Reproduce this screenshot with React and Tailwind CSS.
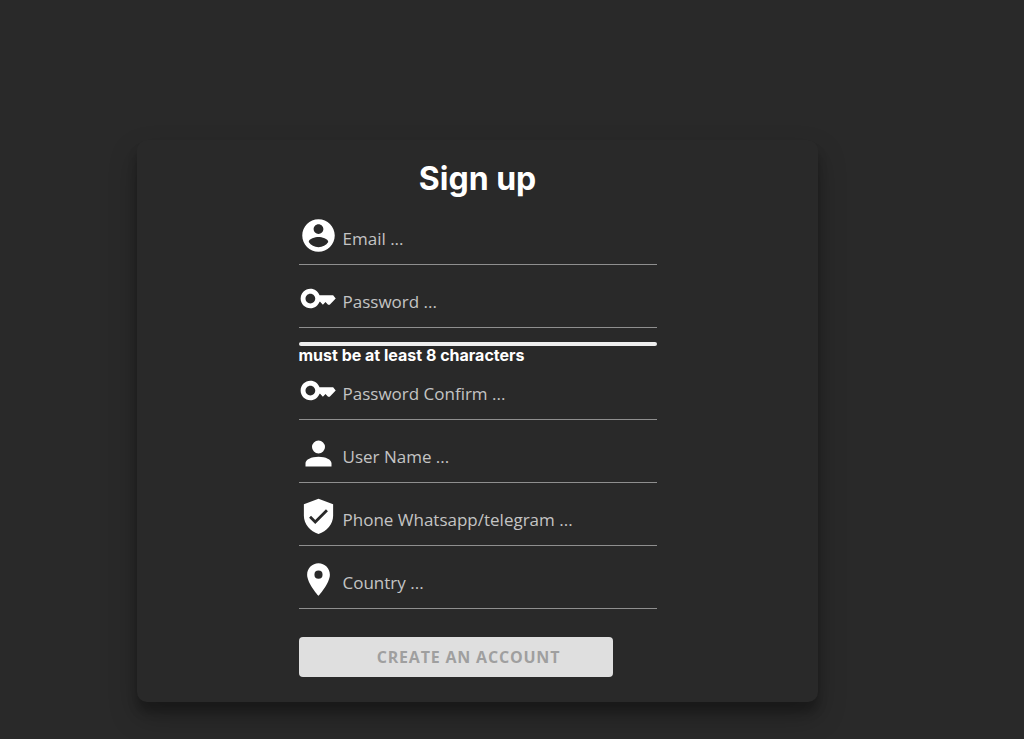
import React, {useState} from 'react';

const icons = {
  account:
    'M12 2C6.48 2 2 6.48 2 12s4.48 10 10 10 10-4.48 10-10S17.52 2 12 2zm0 3c1.66 0 3 1.34 3 3s-1.34 3-3 3-3-1.34-3-3 1.34-3 3-3zm0 14.2c-2.5 0-4.71-1.28-6-3.22.03-1.99 4-3.08 6-3.08 1.99 0 5.97 1.09 6 3.08-1.29 1.94-3.5 3.22-6 3.22z',
  key:
    'M21 10h-8.35C11.83 7.67 9.61 6 7 6c-3.31 0-6 2.69-6 6s2.69 6 6 6c2.61 0 4.83-1.67 5.65-4H13l1.7 1.8 1.6-1.6 1.6 1.6h1l3.7-3.8L21 10zM7 15c-1.65 0-3-1.35-3-3s1.35-3 3-3 3 1.35 3 3-1.35 3-3 3z',
  user:
    'M12 4a4 4 0 1 1 0 8 4 4 0 0 1 0-8zm0 10c4.42 0 8 1.79 8 4v2H4v-2c0-2.21 3.58-4 8-4z',
  shield:
    'M12 1L3 4.5V11.5c0 5 3.9 9.8 9 11.2 5.1-1.4 9-6.2 9-11.2V4.5L12 1zM10 16.6l-3.8-3.8 1.2-1.2 2.6 2.6 6.6-6.6 1.2 1.2L10 16.6z',
  pin:
    'M12 2C8.13 2 5 5.13 5 9c0 5.25 7 13 7 13s7-7.75 7-13c0-3.87-3.13-7-7-7zm0 9.5a2.5 2.5 0 1 1 0-5 2.5 2.5 0 0 1 0 5z'
};

const Field = ({name, icon, label, type = 'text', value, onChange}) => (
  <div className="flex h-[63px] items-start gap-[5px] border-b border-[#8f8f8f] pt-[14px]">
    <svg
      className="h-[39px] w-[39px] shrink-0 fill-white"
      viewBox="0 0 24 24"
      aria-hidden="true">
      <path fillRule="evenodd" d={icons[icon]} />
    </svg>
    <input
      id={name}
      name={name}
      type={type}
      aria-label={label}
      placeholder={`${label} ...`}
      value={value || ''}
      onChange={e => onChange(name, e.target.value)}
      className="mt-[6px] h-8 min-w-0 flex-1 bg-transparent text-[17px] text-white outline-none placeholder:text-[#c4c4c4]"
    />
  </div>
);

export default function App() {
  const [form, setForm] = useState({});
  const update = (name, value) => setForm({...form, [name]: value});
  const disabled = !form.email || !form.password || !form.username;

  const field = (name, icon, label, type) => (
    <Field
      name={name}
      icon={icon}
      label={label}
      type={type}
      value={form[name]}
      onChange={update}
    />
  );

  return (
    <main className="min-h-screen bg-[#292929] px-[137px] pt-[140px] pb-[37px] font-['Open_Sans',sans-serif]">
      <form
        className="mr-[69px] rounded-[10px] bg-[#292929] pt-4 pb-[25px] shadow-[0_14px_28px_rgba(0,0,0,0.25),0_10px_10px_rgba(0,0,0,0.22)]"
        onSubmit={e => e.preventDefault()}>
        <div className="mx-auto max-w-[358px]">
          <h1 className="text-center font-['Inter',sans-serif] text-[32px] leading-[46px] font-bold text-white">
            Sign up
          </h1>
          {field('email', 'account', 'Email', 'email')}
          {field('password', 'key', 'Password', 'password')}
          <div className="mt-[14px] h-1 rounded-sm bg-[#eeeeee]" />
          <p className="h-[11px] font-['Inter',sans-serif] text-base leading-[18px] font-bold text-white">
            must be at least 8 characters
          </p>
          {field('confirm', 'key', 'Password Confirm', 'password')}
          {field('username', 'user', 'User Name')}
          {field('phone', 'shield', 'Phone Whatsapp/telegram', 'tel')}
          {field('country', 'pin', 'Country')}
          <button
            type="submit"
            disabled={disabled}
            className="mt-7 h-10 w-[314px] rounded bg-[#dfdfdf] pl-[26px] text-base font-bold tracking-wider text-[#9f9f9f]">
            CREATE AN ACCOUNT
          </button>
        </div>
      </form>
    </main>
  );
}
